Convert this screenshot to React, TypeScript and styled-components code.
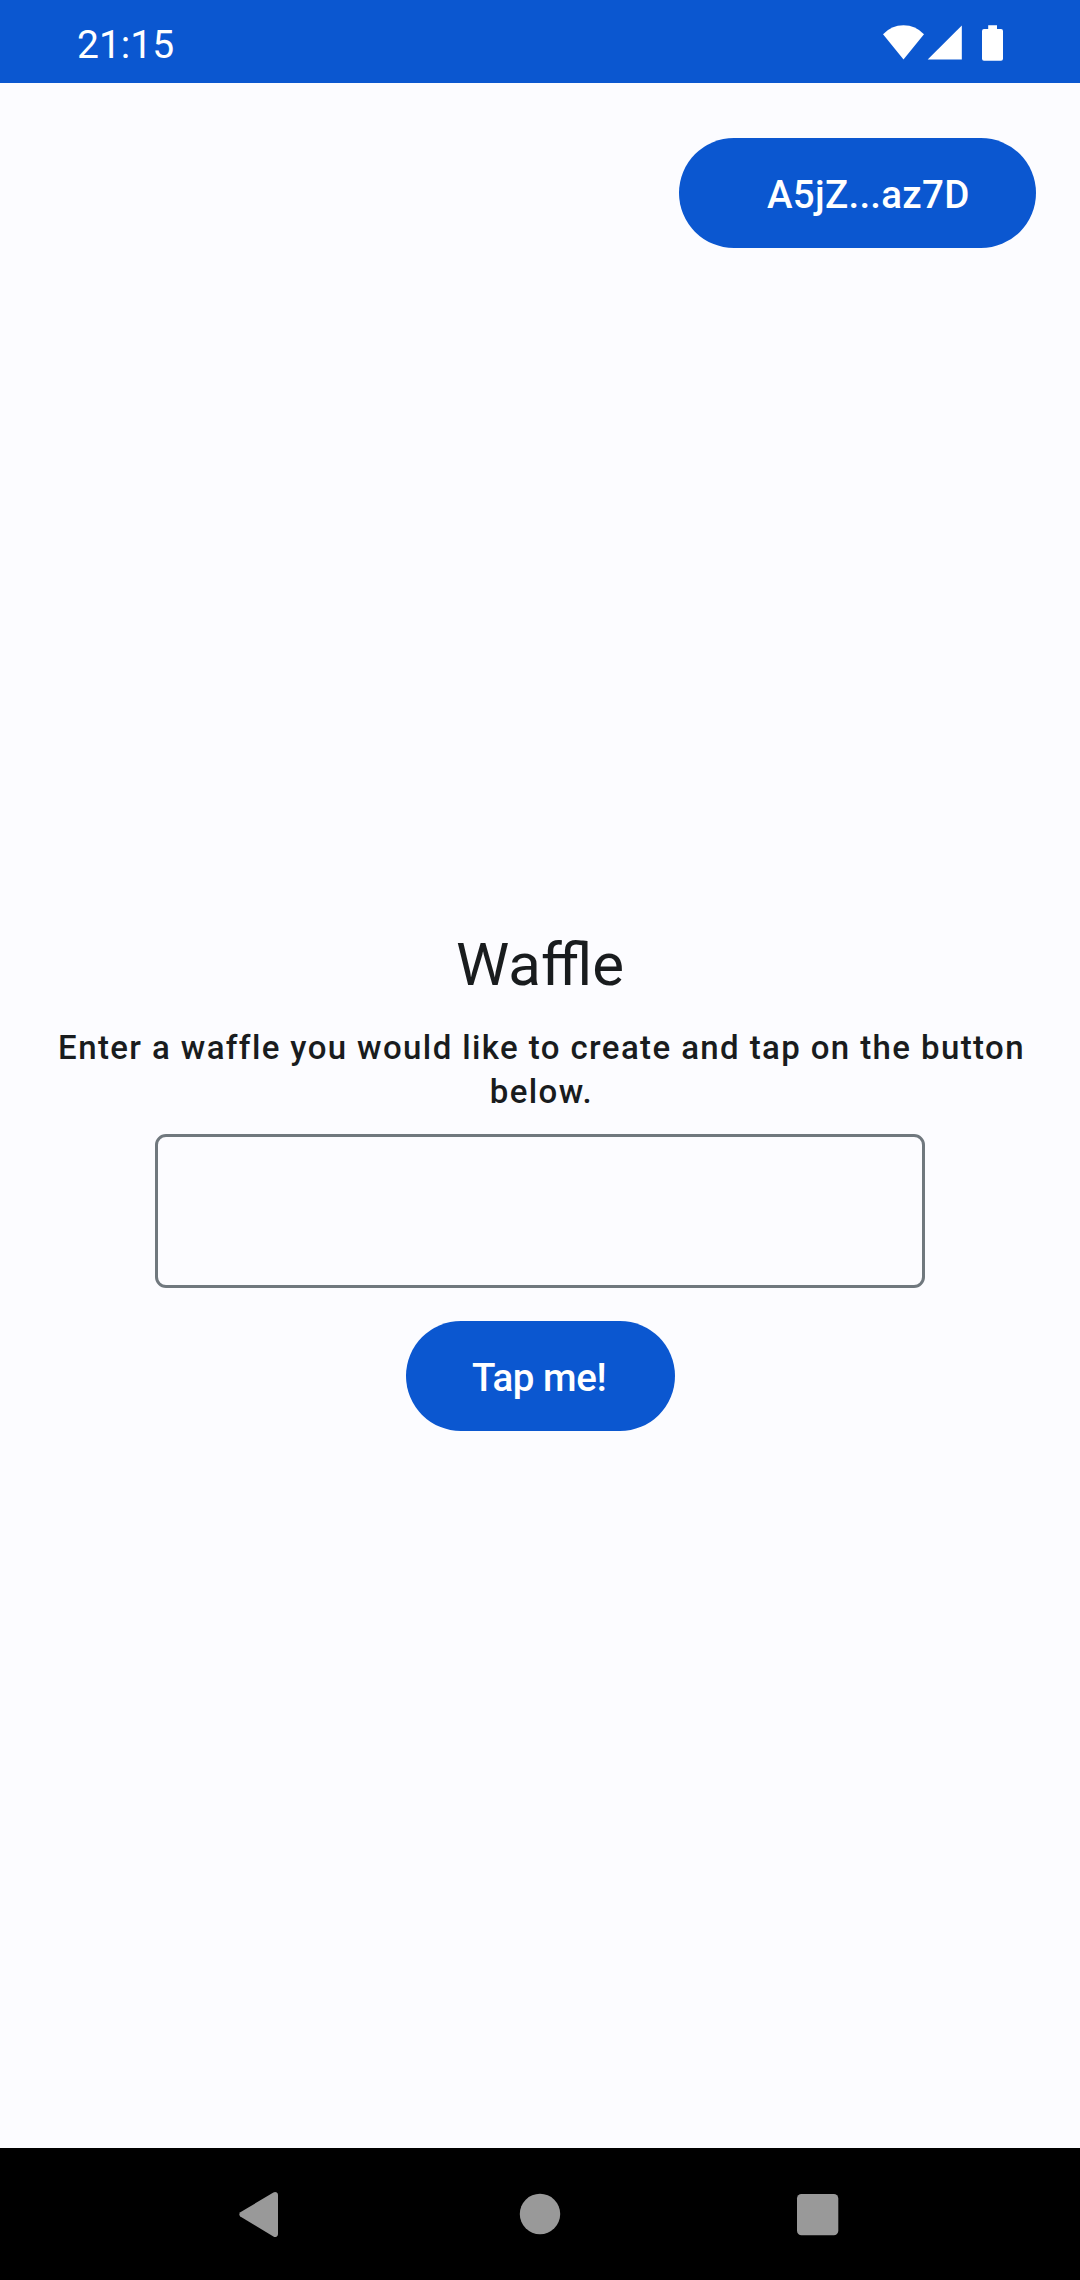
import React from "react";
import styled, { createGlobalStyle } from "styled-components";

const colors = {
  primary: "#0b57d0",
  surface: "#fcfcff",
  ink: "#191c1e",
  outline: "#70787e",
  nav: "#999999",
};

const GlobalStyle = createGlobalStyle`
  *, *::before, *::after { box-sizing: border-box; }
  body { margin: 0; background: ${colors.surface}; }
`;

const Screen = styled.div`
  display: flex;
  flex-direction: column;
  width: 1080px;
  height: 2280px;
  overflow: hidden;
  background: ${colors.surface};
  color: ${colors.ink};
  font-family: Roboto, "Noto Sans", sans-serif;
`;

const StatusBar = styled.header`
  display: flex;
  align-items: center;
  justify-content: space-between;
  flex: none;
  height: 83px;
  padding: 6px 76px 0 77px;
  background: ${colors.primary};
  color: #fff;
`;

const Clock = styled.time`
  font-size: 39px;
  line-height: 46px;
`;

const StatusIcons = styled.svg`
  display: block;
  width: 122px;
  height: 37px;
  margin-top: -4px;
`;

const TopBar = styled.div`
  display: flex;
  justify-content: flex-end;
  flex: none;
  padding: 55px 44px 0 0;
`;

const Pill = styled.button<{ $width: number; $padding: string; $tracking?: string }>`
  display: flex;
  align-items: center;
  width: ${(p) => p.$width}px;
  height: 110px;
  padding: ${(p) => p.$padding};
  border: 0;
  border-radius: 55px;
  background: ${colors.primary};
  color: #fff;
  font-family: inherit;
  font-size: 38.5px;
  font-weight: 500;
  line-height: 55px;
  letter-spacing: ${(p) => p.$tracking ?? "normal"};
  white-space: nowrap;
`;

const Content = styled.main`
  display: flex;
  flex-direction: column;
  align-items: center;
  flex: 1;
  padding: 678px 44px 0;
`;

const Title = styled.h1`
  margin: 0;
  font-size: 60px;
  font-weight: 400;
  line-height: 77px;
`;

const Hint = styled.p`
  margin: 23px 0 0;
  padding-left: 3px;
  font-size: 33px;
  font-weight: 500;
  line-height: 44px;
  letter-spacing: 1.39px;
  text-align: center;
`;

const Field = styled.input`
  flex: none;
  width: 770px;
  height: 154px;
  margin: 20px 0 33px;
  padding: 0 44px;
  border: 3px solid ${colors.outline};
  border-radius: 11px;
  background: transparent;
  color: inherit;
  font: inherit;
  font-size: 44px;
  outline: none;
`;

const NavBar = styled.nav`
  display: flex;
  align-items: center;
  justify-content: center;
  flex: none;
  height: 132px;
  background: #000;
`;

const NavButton = styled.span`
  display: flex;
  align-items: center;
  justify-content: center;
  width: 278px;
  height: 132px;

  svg {
    display: block;
    fill: ${colors.nav};
  }
`;

export default function App() {
  return (
    <>
      <GlobalStyle />
      <Screen>
        <StatusBar>
          <Clock>21:15</Clock>
          <StatusIcons viewBox="882 24 122 37" fill="#fff">
            <path d="M903.5 59.5 883 34.3Q891.5 25.3 903.5 25.3T924 34.3Z" />
            <path d="M927.7 59.6 961.8 25.5V59.6Z" />
            <path d="M988.2 25.2h8.8v3.8h4a2 2 0 0 1 2 2v27.8a2 2 0 0 1-2 2h-17a2 2 0 0 1-2-2V31a2 2 0 0 1 2-2h4.2Z" />
          </StatusIcons>
        </StatusBar>
        <TopBar>
          <Pill $width={357} $padding="3px 0 0 88px" $tracking="0.28px">A5jZ...az7D</Pill>
        </TopBar>
        <Content>
          <Title>Waffle</Title>
          <Hint>
            Enter a waffle you would like to create and tap on the button
            <br />
            below.
          </Hint>
          <Field aria-label="Waffle" />
          <Pill $width={269} $padding="3px 0 0 66.5px" $tracking="-0.45px">Tap me!</Pill>
        </Content>
        <NavBar>
          <NavButton>
            <svg width="48" height="48" viewBox="238 2190 48 48">
              <path d="M240.3 2212.2 273.4 2192.6Q275.2 2191.6 276.8 2192.6 278 2193.4 278 2195V2234Q278 2235.6 276.8 2236.4 275.2 2237.4 273.4 2236.4L240.3 2216.6Q238.4 2214.4 240.3 2212.2Z" />
            </svg>
          </NavButton>
          <NavButton>
            <svg width="48" height="48" viewBox="516 2190 48 48">
              <circle cx="540" cy="2214" r="20.2" />
            </svg>
          </NavButton>
          <NavButton>
            <svg width="48" height="48" viewBox="794 2190 48 48">
              <rect x="797" y="2194" width="41.3" height="41.3" rx="4.5" />
            </svg>
          </NavButton>
        </NavBar>
      </Screen>
    </>
  );
}
